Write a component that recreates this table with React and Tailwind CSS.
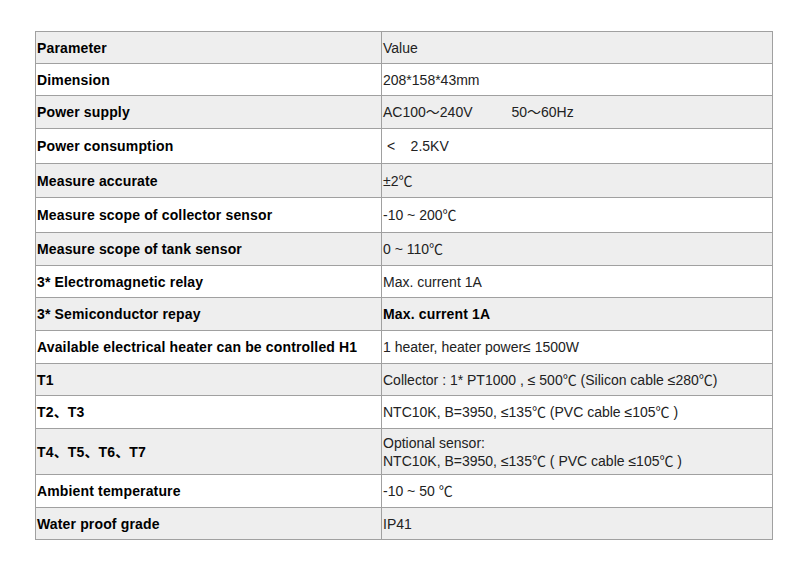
import React from "react";

const rows = [
  ["Parameter", "Value", 32],
  ["Dimension", "208*158*43mm", 32],
  ["Power supply", "AC100～240V\u00a0\u00a0\u00a0\u00a0\u00a0\u00a0\u00a0\u00a0\u00a0\u00a050～60Hz", 33],
  ["Power consumption", "\u00a0<\u00a0\u00a0\u00a0\u00a02.5KV", 35],
  ["Measure accurate", "±2℃", 34],
  ["Measure scope of collector sensor", "-10 ~ 200℃", 35],
  ["Measure scope of tank sensor", "0 ~ 110℃", 33],
  ["3* Electromagnetic relay", "Max. current 1A", 32],
  ["3* Semiconductor repay", "Max. current 1A", 33, true],
  ["Available electrical heater can be controlled H1", "1 heater, heater power≤ 1500W", 33],
  ["T1", "Collector : 1* PT1000 , ≤ 500℃ (Silicon cable ≤280℃)", 32],
  ["T2、T3", "NTC10K, B=3950, ≤135℃ (PVC cable ≤105℃ )", 33],
  ["T4、T5、T6、T7", "multi", 46],
  ["Ambient temperature", "-10 ~ 50 ℃", 33],
  ["Water proof grade", "IP41", 32],
];

export default function App() {
  return (
    <div className="w-[806px] h-[572px] bg-white pt-[31px] pl-[35px] text-[14px] leading-[18px] text-[#222]" style={{ fontFamily: '"Liberation Sans", Arial, "Noto Sans CJK SC", sans-serif' }}>
      <div className="w-[738px] border-l border-t border-[#a0a0a0]">
        {rows.map(([k, v, h, bold], i) => (
          <div key={i} className={`flex ${i % 2 === 0 ? "bg-[#eeeeee]" : "bg-white"}`} style={{ height: h }}>
            <div className="w-[346px] border-r border-b border-[#a0a0a0] flex items-center pl-px font-bold text-black tracking-[0.15px] whitespace-pre">{k}</div>
            <div className={`w-[391px] border-r border-b border-[#a0a0a0] flex items-center pl-px whitespace-pre ${bold ? "font-bold text-black tracking-[0.15px]" : ""}`}>
              {v === "multi" ? (
                <div>
                  <div>Optional sensor:</div>
                  <div>NTC10K, B=3950, ≤135℃ ( PVC cable ≤105℃ )</div>
                </div>
              ) : v}
            </div>
          </div>
        ))}
      </div>
    </div>
  );
}
